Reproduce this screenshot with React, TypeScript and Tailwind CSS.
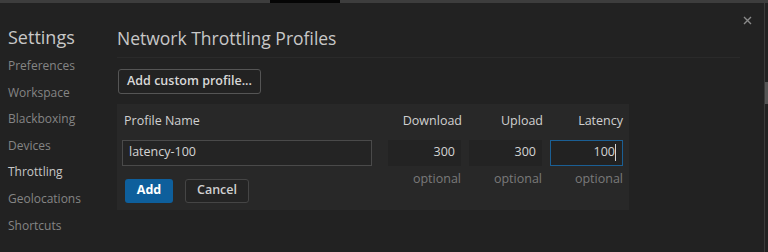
const font = { fontFamily: '"Open Sans", "Noto Sans", sans-serif' };

const navItems = [
  'Preferences',
  'Workspace',
  'Blackboxing',
  'Devices',
  'Throttling',
  'Geolocations',
  'Shortcuts',
];

const NumberField = ({ value, active }: { value: string; active?: boolean }) => (
  <div className="flex flex-col items-end">
    <div
      className={`h-[26px] w-[73px] flex items-center justify-end pr-[6px] text-[12.5px] text-[#d4d4d4] ${
        active ? 'border border-[#1b5f94] bg-[#222222]' : 'bg-[#232323]'
      }`}
    >
      {value}
      {active && <span className="w-px h-[17px] bg-[#d4d4d4]" />}
    </div>
    <span className="mt-[4px] text-[12.5px] text-[#7a7a7a] leading-[18px]">optional</span>
  </div>
);

export default function App() {
  return (
    <div className="w-[768px] h-[252px] bg-[#222222] overflow-hidden flex flex-col" style={font}>
      {/* window top strip */}
      <div className="h-[3px] flex">
        <div className="w-[270px] bg-[#3d3d3d]" />
        <div className="w-[70px] bg-[#050505]" />
        <div className="flex-1 bg-[#3d3d3d]" />
      </div>

      <div className="flex-1 flex">
        {/* sidebar */}
        <div className="w-[117px] pl-[8px] pt-[21px]">
          <div className="text-[18px] text-[#c8c8c8] leading-[26px]">Settings</div>
          <div className="mt-[3px] flex flex-col">
            {navItems.map((item) => (
              <div
                key={item}
                className={`h-[26.6px] leading-[26px] text-[12px] ${
                  item === 'Throttling' ? 'text-[#c8c8c8]' : 'text-[#858585]'
                }`}
              >
                {item}
              </div>
            ))}
          </div>
        </div>

        {/* main */}
        <div className="flex-1 flex flex-col">
          <div className="flex items-start">
            <div className="flex-1 pt-[23px] pb-[7px] text-[17.5px] leading-[24px] text-[#c8c8c8]">
              Network Throttling Profiles
            </div>
            <div className="w-[21px] pt-[13px]">
              <svg width="9" height="9" viewBox="0 0 9 9" className="text-[#8a8a8a]">
                <path d="M1 1 L8 8 M8 1 L1 8" stroke="currentColor" strokeWidth="1.4" />
              </svg>
            </div>
          </div>
          <div className="mr-[24px] h-px bg-[#2a2a2a]" />

          <div className="mt-[9px] pl-[1px]">
            <button className="h-[25px] w-[143px] rounded-[3px] border border-[#555555] text-[12.5px] font-semibold text-[#d8d8d8] leading-none">
              Add custom profile...
            </button>
          </div>

          <div className="mt-[10px] w-[512px] h-[106px] bg-[#282828] pl-[5px] pr-[5px] pt-[7px]">
            <div className="flex text-[12.5px] text-[#d0d0d0] leading-[20px]">
              <div className="flex-1 pl-[2px]">Profile Name</div>
              <div className="w-[79px] text-right">Download</div>
              <div className="w-[81px] text-right">Upload</div>
              <div className="w-[81px] text-right pr-[1px]">Latency</div>
            </div>
            <div className="mt-[9px] flex">
              <div className="flex-1 flex flex-col">
                <div className="w-[250px] h-[26px] border border-[#4a4a4a] bg-[#242424] flex items-center pl-[6px] text-[12.5px] text-[#d4d4d4]">
                  latency-100
                </div>
                <div className="mt-[13px] flex gap-[12px] pl-[3px]">
                  <button className="h-[24px] w-[48px] rounded-[3px] bg-[#0e5f9c] text-[12.5px] font-bold text-white">
                    Add
                  </button>
                  <button className="h-[24px] w-[64px] rounded-[3px] border border-[#454545] bg-[#242424] text-[12.5px] font-semibold text-[#d0d0d0]">
                    Cancel
                  </button>
                </div>
              </div>
              <div className="flex gap-[8px] mr-[1px]">
                <NumberField value="300" />
                <NumberField value="300" />
                <NumberField value="100" active />
              </div>
            </div>
          </div>
        </div>

        {/* right edge / scrollbar */}
        <div className="w-[4px] flex">
          <div className="w-px bg-[#3a3a3a]" />
          <div className="flex-1 flex flex-col">
            <div className="h-[79px]" />
            <div className="h-[22px] bg-[#555555]" />
          </div>
        </div>
      </div>
    </div>
  );
}
